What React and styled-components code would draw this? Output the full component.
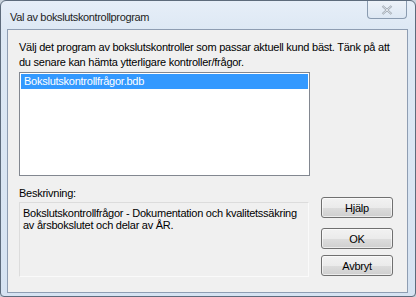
import styled, { createGlobalStyle } from 'styled-components';

const Global = createGlobalStyle`
  html, body {
    margin: 0;
    padding: 0;
    background: #c8d2dc;
  }
  body {
    font-family: "Liberation Sans", Arial, sans-serif;
    font-size: 11px;
    letter-spacing: -0.25px;
    color: #000;
  }
`;

const Window = styled.div`
  width: 416px;
  height: 297px;
  box-sizing: border-box;
  display: flex;
  flex-direction: column;
  border: 1px solid #5d6b7c;
  border-radius: 6px 6px 4px 4px;
  background: linear-gradient(to bottom, #e6eef8 0px, #dde8f4 30px, #d6e3f2 100%);
  overflow: hidden;
`;

const TitleBar = styled.div`
  height: 28px;
  display: flex;
  align-items: flex-start;
  justify-content: space-between;
  padding: 0 8px 0 9px;
`;

const Title = styled.span`
  font-size: 11px;
  letter-spacing: -0.35px;
  line-height: 14px;
  margin-top: 9px;
  color: #1e1e1e;
`;

const CloseButton = styled.div`
  width: 40px;
  height: 18px;
  box-sizing: border-box;
  border: 1px solid #8a9bb0;
  border-top: none;
  border-radius: 0 0 4px 4px;
  background: linear-gradient(to bottom, #edf2f8, #dde7f3);
  display: flex;
  align-items: center;
  justify-content: center;
`;

const Client = styled.div`
  flex: 1;
  margin: 0 7px 3px 6px;
  border: 1px solid #8e9db2;
  background: #f0f0f0;
  padding: 10px 0 0 11px;
  display: flex;
  flex-direction: column;
`;

const Intro = styled.p`
  margin: 0;
  width: 385px;
  line-height: 15px;
`;

const ListBox = styled.div`
  width: 291px;
  height: 104px;
  box-sizing: border-box;
  margin-top: 2px;
  border: 1px solid #828790;
  background: #fff;
  padding: 1px;
`;

const ListItem = styled.div`
  height: 15px;
  line-height: 15px;
  padding-left: 3px;
  background: ${p => (p.selected ? '#3399ff' : 'transparent')};
  color: ${p => (p.selected ? '#fff' : '#000')};
`;

const Bottom = styled.div`
  display: grid;
  grid-template-columns: 290px 72px;
  column-gap: 12px;
  margin-top: 10px;
`;

const Left = styled.div`
  display: flex;
  flex-direction: column;
`;

const Label = styled.div`
  line-height: 14px;
  height: 16px;
`;

const DescBox = styled.div`
  height: 75px;
  box-sizing: border-box;
  border: 1px solid #dcdcdc;
  border-right-color: #fafafa;
  border-bottom-color: #fafafa;
  background: #f0f0f0;
  padding: 4px 3px;
  line-height: 12px;
`;

const Buttons = styled.div`
  display: flex;
  flex-direction: column;
  padding-top: 11px;
`;

const Button = styled.button`
  width: 72px;
  height: 21px;
  margin-top: ${p => p.gap || 0}px;
  box-sizing: border-box;
  border: 1px solid #707070;
  border-radius: 3px;
  background: linear-gradient(to bottom, #f2f2f2 0%, #ebebeb 50%, #dddddd 51%, #cfcfcf 100%);
  font-family: "Liberation Sans", Arial, sans-serif;
  font-size: 11px;
  letter-spacing: -0.25px;
  color: #000;
  padding: 0;
  box-shadow: inset 0 0 0 1px rgba(255, 255, 255, 0.6);
`;

export default function App() {
  return (
    <>
      <Global />
      <Window>
        <TitleBar>
          <Title>Val av bokslutskontrollprogram</Title>
          <CloseButton>
            <svg width="12" height="10" viewBox="0 0 12 10">
              <path d="M1.5 1 L10.5 9 M10.5 1 L1.5 9" stroke="#9aa3ae" strokeWidth="2.2" fill="none" />
              <path d="M1.5 1 L10.5 9 M10.5 1 L1.5 9" stroke="#f4f6f9" strokeWidth="0.8" fill="none" />
            </svg>
          </CloseButton>
        </TitleBar>
        <Client>
          <Intro>
            Välj det program av bokslutskontroller som passar aktuell kund bäst. Tänk på att du senare kan hämta ytterligare kontroller/frågor.
          </Intro>
          <ListBox>
            <ListItem selected>Bokslutskontrollfrågor.bdb</ListItem>
          </ListBox>
          <Bottom>
            <Left>
              <Label>Beskrivning:</Label>
              <DescBox>
                Bokslutskontrollfrågor - Dokumentation och kvalitetssäkring av årsbokslutet och delar av ÅR.
              </DescBox>
            </Left>
            <Buttons>
              <Button>Hjälp</Button>
              <Button gap={10}>OK</Button>
              <Button gap={6}>Avbryt</Button>
            </Buttons>
          </Bottom>
        </Client>
      </Window>
    </>
  );
}
